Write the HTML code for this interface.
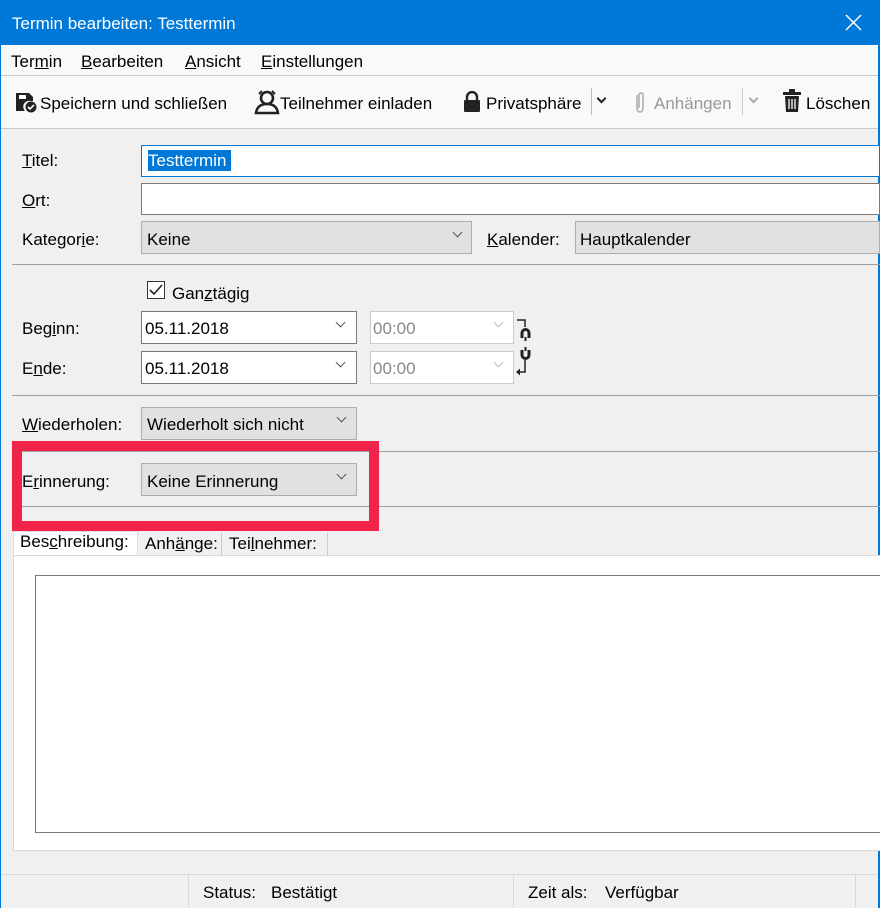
<!DOCTYPE html>
<html><head><meta charset="utf-8"><style>
*{box-sizing:border-box;margin:0;padding:0}
body{width:880px;height:908px;overflow:hidden;background:#f0f0f0;font-family:"Liberation Sans",sans-serif;font-size:17px;color:#000;position:relative}
.a{position:absolute;white-space:nowrap}
.t{margin-top:1px}
.u{text-decoration:underline}
.inp{position:absolute;background:#fff;border:1px solid #7a7a7a}
.sel{position:absolute;background:#e1e1e1;border:1px solid #adadad}
.chev{position:absolute;width:7px;height:7px;border-right:1.3px solid #555;border-bottom:1.3px solid #555;transform:rotate(45deg)}
.line{position:absolute;height:1px;background:#a0a0a0}
</style></head><body>
<div class="a" style="left:0;top:0;width:880px;height:45px;background:#0078d7"></div>
<div class="a" style="left:12px;top:14px;color:#fff;font-size:17px">Termin bearbeiten: Testtermin</div>
<svg class="a" style="left:845px;top:14px" width="17" height="17"><path d="M1 1L16 16M16 1L1 16" stroke="#fff" stroke-width="1.5"/></svg>
<div class="a" style="left:0;top:45px;width:1px;height:863px;background:#0078d7"></div>
<div class="a" style="left:878px;top:45px;width:2px;height:863px;background:#0078d7"></div>
<div class="a" style="left:1px;top:45px;width:877px;height:31px;background:#f9f9f9;border-bottom:1px solid #c8c8c8"></div>
<div class="a" style="left:11px;top:52px">Ter<span class="u">m</span>in</div>
<div class="a" style="left:81px;top:52px"><span class="u">B</span>earbeiten</div>
<div class="a" style="left:185px;top:52px"><span class="u">A</span>nsicht</div>
<div class="a" style="left:261px;top:52px"><span class="u">E</span>instellungen</div>
<div class="a" style="left:1px;top:76px;width:877px;height:53px;background:#f9f9f9;border-bottom:1px solid #c8c8c8"></div>
<svg class="a" style="left:15px;top:91px" width="24" height="22"><path d="M1 2h13l4 4v4h-2a6 6 0 0 0-6 10H1z" fill="#222"/><rect x="4" y="4" width="7" height="4" fill="#fff"/><circle cx="16" cy="16" r="5.5" fill="#222"/><path d="M13 16l2 2 4-4" stroke="#fff" stroke-width="1.6" fill="none"/></svg>
<div class="a" style="left:40px;top:94px">Speichern und schließen</div>
<svg class="a" style="left:254px;top:89px" width="26" height="26"><circle cx="13" cy="9" r="6" stroke="#222" stroke-width="2.6" fill="none"/><path d="M2 24c1-7 6-9 11-9s10 2 11 9z" stroke="#222" stroke-width="2.6" fill="none"/><path d="M5 5l3-3M21 5l-3-3" stroke="#222" stroke-width="2"/></svg>
<div class="a" style="left:280px;top:94px">Teilnehmer einladen</div>
<svg class="a" style="left:462px;top:91px" width="20" height="22"><path d="M5 9V6a5 5 0 0 1 10 0v3" stroke="#222" stroke-width="2.4" fill="none"/><rect x="2" y="9" width="16" height="12" rx="1" fill="#222"/></svg>
<div class="a" style="left:486px;top:94px">Privatsphäre</div>
<div class="a" style="left:591px;top:88px;width:1px;height:27px;background:#bbb"></div>
<div class="chev" style="left:598px;top:95px;border-color:#222;border-width:2.4px"></div>
<svg class="a" style="left:633px;top:90px" width="14" height="26"><path d="M4 5v14a3 3 0 0 0 6 0V5a2 2 0 0 0-4 0v13" stroke="#aaa" stroke-width="1.5" fill="none"/></svg>
<div class="a" style="left:654px;top:94px;color:#999">Anhängen</div>
<div class="a" style="left:742px;top:88px;width:1px;height:27px;background:#ccc"></div>
<div class="chev" style="left:750px;top:95px;border-color:#aaa;border-width:2px"></div>
<svg class="a" style="left:782px;top:89px" width="20" height="24"><rect x="1" y="3" width="18" height="3" fill="#222"/><rect x="7" y="0" width="6" height="3" fill="#222"/><path d="M3 7h14l-1 16H4z" fill="#222"/><path d="M7 10v10M10 10v10M13 10v10" stroke="#fff" stroke-width="1.3"/></svg>
<div class="a" style="left:806px;top:94px">Löschen</div>

<div class="a" style="left:22px;top:151px"><span class="u">T</span>itel:</div>
<div class="inp" style="left:141px;top:145px;width:739px;height:32px;border-color:#0078d7"></div>
<div class="a" style="left:148px;top:150px;height:21px;width:83px;background:#0078d7;color:#fff;line-height:22px">Testtermin</div>
<div class="a" style="left:22px;top:191px"><span class="u">O</span>rt:</div>
<div class="inp" style="left:141px;top:183px;width:739px;height:32px"></div>
<div class="a" style="left:22px;top:230px">Kategor<span class="u">i</span>e:</div>
<div class="sel" style="left:141px;top:221px;width:331px;height:33px"></div>
<div class="a" style="left:147px;top:230px">Keine</div>
<div class="chev" style="left:454px;top:229px"></div>
<div class="a" style="left:487px;top:230px"><span class="u">K</span>alender:</div>
<div class="sel" style="left:575px;top:221px;width:305px;height:33px"></div>
<div class="a" style="left:580px;top:230px">Hauptkalender</div>
<div class="line" style="left:12px;top:264px;width:868px"></div>

<div class="a" style="left:147px;top:281px;width:18px;height:18px;border:1px solid #333;background:#fff"></div>
<svg class="a" style="left:149px;top:283px" width="14" height="14"><path d="M1 7l4 4 8-9" stroke="#222" stroke-width="1.6" fill="none"/></svg>
<div class="a" style="left:172px;top:284px">Gan<span class="u">z</span>tägig</div>
<div class="a" style="left:22px;top:319px">Beg<span class="u">i</span>nn:</div>
<div class="inp" style="left:141px;top:311px;width:216px;height:33px"></div>
<div class="a" style="left:145px;top:319px">05.11.2018</div>
<div class="chev" style="left:337px;top:319px"></div>
<div class="inp" style="left:370px;top:311px;width:144px;height:33px;border-color:#ccc"></div>
<div class="a" style="left:373px;top:319px;color:#888">00:00</div>
<div class="chev" style="left:495px;top:319px;border-color:#bbb"></div>
<div class="a" style="left:22px;top:359px">E<span class="u">n</span>de:</div>
<div class="inp" style="left:141px;top:351px;width:216px;height:33px"></div>
<div class="a" style="left:145px;top:359px">05.11.2018</div>
<div class="chev" style="left:337px;top:359px"></div>
<div class="inp" style="left:370px;top:351px;width:144px;height:33px;border-color:#ccc"></div>
<div class="a" style="left:373px;top:359px;color:#888">00:00</div>
<div class="chev" style="left:495px;top:359px;border-color:#bbb"></div>
<svg class="a" style="left:515px;top:318px" width="22" height="62"><path d="M2 2h8v7" stroke="#222" stroke-width="1.5" fill="none"/><path d="M7 20v-5a3.5 3.5 0 0 1 7 0v5" stroke="#222" stroke-width="3" fill="none"/><path d="M10.5 19v4" stroke="#222" stroke-width="2"/><path d="M7 32v5a3.5 3.5 0 0 0 7 0v-5" stroke="#222" stroke-width="3" fill="none"/><path d="M10.5 29v4" stroke="#222" stroke-width="2"/><path d="M10 42v12H4" stroke="#222" stroke-width="1.5" fill="none"/><path d="M1 54l4-3.5v7z" fill="#222"/></svg>
<div class="line" style="left:12px;top:395px;width:868px"></div>

<div class="a" style="left:22px;top:415px"><span class="u">W</span>iederholen:</div>
<div class="sel" style="left:141px;top:407px;width:216px;height:33px"></div>
<div class="a" style="left:147px;top:415px">Wiederholt sich nicht</div>
<div class="chev" style="left:338px;top:414px"></div>
<div class="line" style="left:12px;top:451px;width:868px"></div>
<div class="a" style="left:22px;top:472px">E<span class="u">r</span>innerung:</div>
<div class="sel" style="left:141px;top:463px;width:216px;height:33px"></div>
<div class="a" style="left:147px;top:472px">Keine Erinnerung</div>
<div class="chev" style="left:338px;top:471px"></div>
<div class="line" style="left:12px;top:506px;width:868px"></div>
<div class="a" style="left:12px;top:441px;width:367px;height:90px;border:10px solid #f0234b"></div>

<div class="a" style="left:13px;top:531px;width:125px;height:25px;background:#fff;border:1px solid #ddd;border-bottom:none"></div>
<div class="a" style="left:20px;top:532px">Bes<span class="u">c</span>hreibung:</div>
<div class="a" style="left:138px;top:533px;width:84px;height:22px;border-right:1px solid #ccc"></div>
<div class="a" style="left:145px;top:534px">Anh<span class="u">ä</span>nge:</div>
<div class="a" style="left:222px;top:533px;width:106px;height:22px;border-right:1px solid #ccc"></div>
<div class="a" style="left:229px;top:534px">Tei<span class="u">l</span>nehmer:</div>
<div class="a" style="left:13px;top:555px;width:867px;height:296px;background:#fff;border:1px solid #d9d9d9;border-right:none"></div>
<div class="a" style="left:35px;top:575px;width:845px;height:258px;border:1px solid #7a7a7a;border-right:none"></div>

<div class="a" style="left:1px;top:874px;width:877px;height:1px;background:#d9d9d9"></div>
<div class="a" style="left:188px;top:875px;width:1px;height:33px;background:#d9d9d9"></div>
<div class="a" style="left:513px;top:875px;width:1px;height:33px;background:#d9d9d9"></div>
<div class="a" style="left:855px;top:875px;width:1px;height:33px;background:#d9d9d9"></div>
<div class="a" style="left:203px;top:883px">Status:</div>
<div class="a" style="left:271px;top:883px">Bestätigt</div>
<div class="a" style="left:528px;top:883px">Zeit als:</div>
<div class="a" style="left:605px;top:883px">Verfügbar</div>
</body></html>
